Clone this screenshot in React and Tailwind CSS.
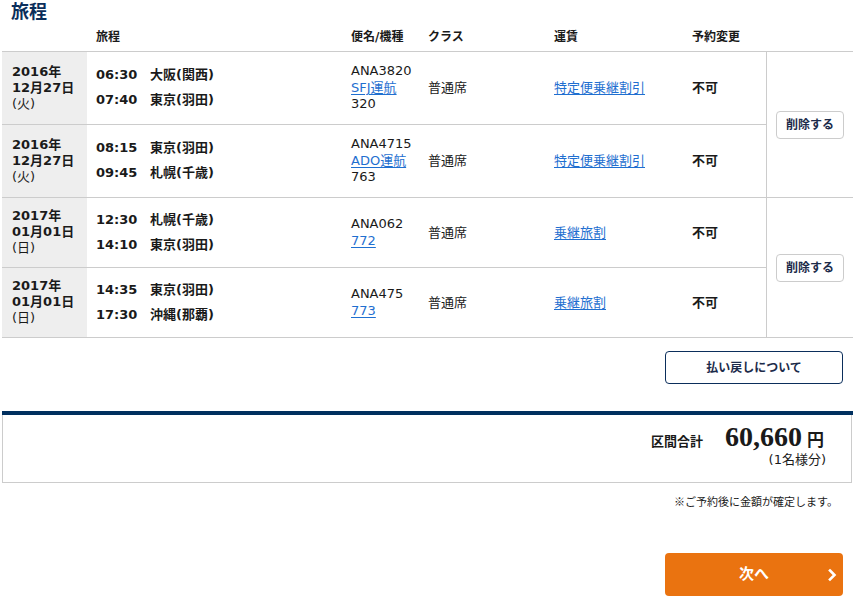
import React from "react";

const FONT = { fontFamily: '"DejaVu Sans", "Noto Sans CJK JP", sans-serif' };
const CJK = { fontFamily: '"Noto Sans CJK JP", sans-serif' };

const groups = [
  {
    rows: [
      {
        y: "2016年", md: "12月27日", wd: "(火)",
        dep: ["06:30", "大阪(関西)"], arr: ["07:40", "東京(羽田)"],
        flight: "ANA3820", op: "SFJ運航", eq: "320", eqLink: false,
        fare: "特定便乗継割引",
      },
      {
        y: "2016年", md: "12月27日", wd: "(火)",
        dep: ["08:15", "東京(羽田)"], arr: ["09:45", "札幌(千歳)"],
        flight: "ANA4715", op: "ADO運航", eq: "763", eqLink: false,
        fare: "特定便乗継割引",
      },
    ],
    h: ["h-[73px]", "h-[72px]"],
  },
  {
    rows: [
      {
        y: "2017年", md: "01月01日", wd: "(日)",
        dep: ["12:30", "札幌(千歳)"], arr: ["14:10", "東京(羽田)"],
        flight: "ANA062", op: null, eq: "772", eqLink: true,
        fare: "乗継旅割",
      },
      {
        y: "2017年", md: "01月01日", wd: "(日)",
        dep: ["14:35", "東京(羽田)"], arr: ["17:30", "沖縄(那覇)"],
        flight: "ANA475", op: null, eq: "773", eqLink: true,
        fare: "乗継旅割",
      },
    ],
    h: ["h-[70px]", "h-[69px]"],
  },
];

const cols = "grid grid-cols-[85px_255px_77px_126px_138px_83px]";
const link = "text-[#1f6fd0] underline underline-offset-2";

function Row({ r, h, last }) {
  return (
    <div className={`${cols} ${h} ${last ? "" : "border-b border-[#cccccc]"}`}>
      <div className="bg-[#eeeeee] pl-[10px] flex flex-col justify-center text-[13px] leading-[16px] pb-[1px]">
        <div className="font-bold">{r.y}</div>
        <div className="font-bold">{r.md}</div>
        <div>{r.wd}</div>
      </div>
      <div className="pl-[9px] flex flex-col justify-center gap-[9px] text-[13px] leading-[16px] font-bold pb-[1px]">
        <div className="flex">
          <span className="w-[54px]">{r.dep[0]}</span>
          <span>{r.dep[1]}</span>
        </div>
        <div className="flex">
          <span className="w-[54px]">{r.arr[0]}</span>
          <span>{r.arr[1]}</span>
        </div>
      </div>
      <div className="pl-[9px] flex flex-col justify-center text-[13px] leading-[16.5px] whitespace-nowrap">
        <div>{r.flight}</div>
        {r.op && <div><span className={link}>{r.op}</span></div>}
        <div>{r.eqLink ? <span className={link}>{r.eq}</span> : r.eq}</div>
      </div>
      <div className="pl-[9px] flex items-center text-[13px]">普通席</div>
      <div className="pl-[9px] flex items-center text-[13px]">
        <span className={link}>{r.fare}</span>
      </div>
      <div className="pl-[9px] flex items-center text-[13px] font-bold">不可</div>
    </div>
  );
}

export default function App() {
  return (
    <div className="w-[853px] h-[607px] bg-white text-[#1a1a1a] pl-[2px]" style={FONT}>
      <div className="pl-[9px] pt-[1px] text-[18px] leading-[18px] font-bold text-[#0b2e5b]" style={CJK}>
        旅程
      </div>
      <div className={`${cols} h-[33px] border-b border-[#cccccc] text-[12px] font-bold pt-[4px]`}>
        <div />
        <div className="pl-[9px] flex items-center">旅程</div>
        <div className="pl-[9px] flex items-center whitespace-nowrap">便名/機種</div>
        <div className="pl-[9px] flex items-center">クラス</div>
        <div className="pl-[9px] flex items-center">運賃</div>
        <div className="pl-[9px] flex items-center">予約変更</div>
      </div>
      {groups.map((g, gi) => (
        <div key={gi} className="flex border-b border-[#cccccc]">
          <div className="w-[764px]">
            {g.rows.map((r, ri) => (
              <Row key={ri} r={r} h={g.h[ri]} last={ri === 1} />
            ))}
          </div>
          <div className="w-[87px] border-l border-[#cccccc] flex items-center justify-center">
            <button className="h-[28px] px-[9px] border border-[#cccccc] rounded-[4px] bg-white text-[12px] font-bold text-[#1c2b4a]">
              削除する
            </button>
          </div>
        </div>
      ))}
      <div className="flex justify-end pr-[10px] mt-[13px]">
        <button className="w-[178px] h-[33px] border border-[#0b2e5b] rounded-[4px] bg-white text-[12px] font-bold text-[#1c2b4a]">
          払い戻しについて
        </button>
      </div>
      <div className="mt-[27px] h-[4px] bg-[#00305f]" />
      <div className="mr-[1px] h-[68px] border-x border-b border-[#cccccc] flex flex-col items-end pt-[6px] pr-[27px]">
        <div className="flex items-baseline">
          <span className="text-[13px] font-bold mr-[22px]">区間合計</span>
          <span className="text-[28px] leading-[32px] font-bold" style={{ fontFamily: '"Liberation Serif", serif' }}>
            60,660
          </span>
          <span className="text-[17px] font-bold ml-[5px]" style={CJK}>円</span>
        </div>
        <div className="text-[13px] leading-[14px] mr-[-2px]">(1名様分)</div>
      </div>
      <div className="flex justify-end pr-[15px] mt-[10px] text-[11px] leading-[16px]" style={CJK}>
        ※ご予約後に金額が確定します。
      </div>
      <div className="flex justify-end pr-[10px] mt-[44px]">
        <button className="relative w-[178px] h-[43px] rounded-[4px] bg-[#ea7310] text-white text-[15px] font-bold flex items-center justify-center">
          次へ
          <svg className="absolute right-[6px] top-1/2 -translate-y-1/2" width="10" height="14" viewBox="0 0 10 14">
            <path d="M3 2.5 L7.5 7 L3 11.5" fill="none" stroke="white" strokeWidth="2.6" strokeLinecap="square" />
          </svg>
        </button>
      </div>
    </div>
  );
}
